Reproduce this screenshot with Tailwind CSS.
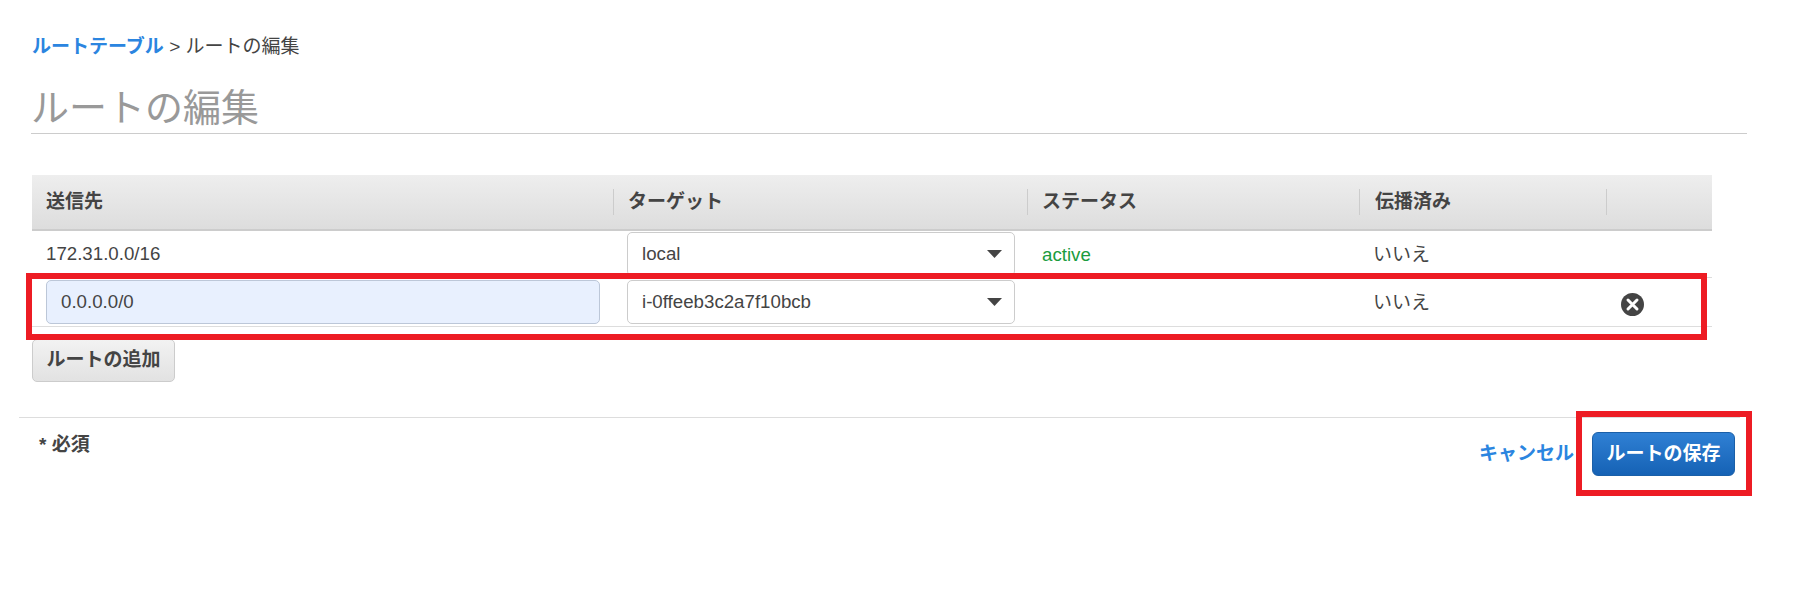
<!DOCTYPE html>
<html lang="ja">
<head>
    <meta charset="UTF-8">
    <script src="https://cdn.jsdelivr.net/npm/@tailwindcss/browser@4"></script>
    <title>ルートの編集</title>
</head>
<body class="relative h-[615px] overflow-hidden bg-white text-[19px] text-[#444] font-['Liberation_Sans','Noto_Sans_CJK_JP',sans-serif]">
    <div class="pl-[32px] pr-[61px]">
        <!-- Breadcrumb -->
        <div class="pt-[33px] h-[60px] leading-[28px]">
            <a class="font-bold text-[#2b85e0]">ルートテーブル</a> &gt; ルートの編集
        </div>
        <!-- Title -->
        <h1 class="h-[74px] -ml-px pt-[25px] text-[38px] leading-[46px] text-[#999] border-b border-[#ccc]">ルートの編集</h1>

        <!-- Routes table -->
        <div class="w-[1680px] mt-[41px]">
            <div class="grid grid-cols-[581px_414px_332px_247px_106px] h-[56px] items-center font-bold bg-gradient-to-b from-[#eee] to-[#ddd] border-b-2 border-[#ccc]">
                <div class="pl-[14px]">送信先</div>
                <div class="pl-[14px] h-[26px] leading-[26px] border-l border-[#ccc]">ターゲット</div>
                <div class="pl-[14px] h-[26px] leading-[26px] border-l border-[#ccc]">ステータス</div>
                <div class="pl-[15px] h-[26px] leading-[26px] border-l border-[#ccc]">伝播済み</div>
                <div class="h-[26px] border-l border-[#ccc]"></div>
            </div>
            <div class="grid grid-cols-[581px_414px_332px_247px_106px] h-[47px] items-center border-b border-[#ddd]">
                <div class="pl-[14px] text-[18.700px]">172.31.0.0/16</div>
                <div class="pl-[14px]">
                    <div class="flex items-center justify-between w-[388px] h-[44px] pl-[14px] pr-[12px] bg-white border border-[#ccc] rounded-[5px] text-[18.700px]">
                        <span>local</span>
                        <svg width="15" height="8" viewBox="0 0 15 8"><path d="M0 0h15L7.500 8z" fill="#444"/></svg>
                    </div>
                </div>
                <div class="pl-[15px] pt-[2px] text-[18.700px] text-[#1a9c3e]">active</div>
                <div class="pl-[14px] pt-[2px]">いいえ</div>
                <div></div>
            </div>
            <div class="grid grid-cols-[581px_414px_332px_247px_106px] h-[49px] pt-[2px] items-start border-b border-[#ddd]">
                <div class="pl-[14px]">
                    <div class="flex items-center w-[554px] h-[44px] px-[14px] bg-[#e8f0fe] border border-[#bcc7d8] rounded-[5px] text-[18.700px]">0.0.0.0/0</div>
                </div>
                <div class="pl-[14px]">
                    <div class="flex items-center justify-between w-[388px] h-[44px] pl-[14px] pr-[12px] bg-white border border-[#ccc] rounded-[5px] text-[18.700px]">
                        <span>i-0ffeeb3c2a7f10bcb</span>
                        <svg width="15" height="8" viewBox="0 0 15 8"><path d="M0 0h15L7.500 8z" fill="#444"/></svg>
                    </div>
                </div>
                <div></div>
                <div class="flex items-center h-[46px] pl-[14px]">いいえ</div>
                <div class="pl-[15px] pt-[13px]">
                    <svg class="block" width="23" height="23" viewBox="0 0 23 23">
                        <circle cx="11.500" cy="11.500" r="11.500" fill="#444"/>
                        <path d="M7 7l9 9M16 7l-9 9" stroke="#fff" stroke-width="3" stroke-linecap="round"/>
                    </svg>
                </div>
            </div>
        </div>

        <button class="block w-[143px] h-[43px] mt-[12px] font-bold bg-gradient-to-b from-[#f2f2f2] to-[#e2e2e2] border border-[#ccc] rounded-[5px]">ルートの追加</button>
    </div>

    <!-- Footer -->
    <div class="flex justify-between ml-[19px] mr-[68px] mt-[35px] pl-[20px] pr-[5px] border-t border-[#ddd]">
        <div class="pt-[13px] leading-[28px] font-bold">* 必須</div>
        <div class="flex items-center gap-[18px] pt-[14px]">
            <a class="font-bold text-[#2b85e0]">キャンセル</a>
            <button class="w-[143px] h-[44px] font-bold text-white bg-gradient-to-b from-[#2f80d4] to-[#1562b5] border border-[#1a5fa8] rounded-[6px]">ルートの保存</button>
        </div>
    </div>

    <!-- Red annotation boxes drawn over the screenshot -->
    <div class="absolute left-[26px] top-[273px] w-[1681px] h-[67px] border-[6px] border-[#ed1c24]"></div>
    <div class="absolute left-[1576px] top-[411px] w-[176px] h-[85px] border-[6px] border-[#ed1c24]"></div>
</body>
</html>
